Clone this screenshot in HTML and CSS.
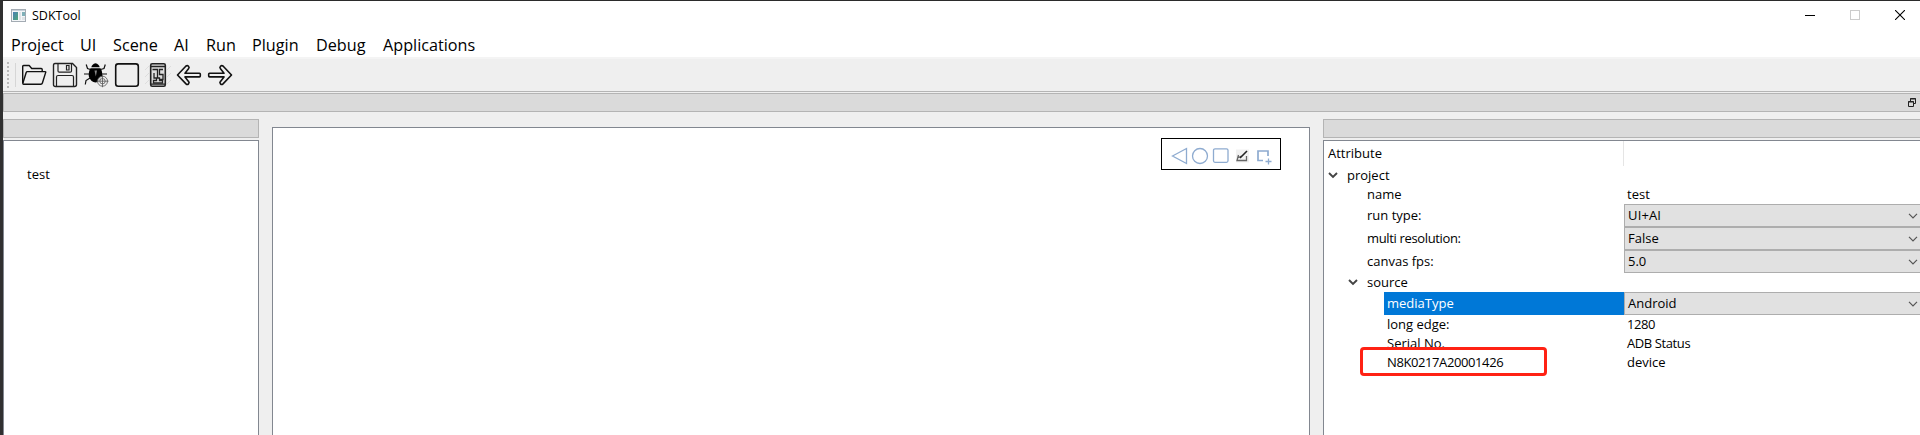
FILE: index.html
```html
<!DOCTYPE html>
<html lang="en">
<head>
<meta charset="utf-8">
<title>SDKTool</title>
<link rel="stylesheet" href="styles.css">
</head>
<body>
<div class="window">
  <header class="titlebar">
    <svg class="app-icon" width="15" height="13" viewBox="0 0 15 13">
      <defs><linearGradient id="pane" x1="0" y1="0" x2="1" y2="1"><stop offset="0" stop-color="#4a7fb5"/><stop offset="1" stop-color="#4fa878"/></linearGradient></defs>
      <rect x=".5" y=".5" width="14" height="12" fill="#f4f6f8" stroke="#a3abb3"/>
      <path d="M1 1.5h13" stroke="#c7d0d9"/>
      <rect x="2" y="3" width="5" height="8" fill="url(#pane)"/>
      <rect x="8" y="3" width="2" height="8" fill="#dfe3e6"/>
      <rect x="11" y="3" width="3" height="4" fill="#7fb0b8"/><rect x="11" y="8" width="3" height="3" fill="#dfe3e6"/>
    </svg>
    <span class="app-name">SDKTool</span>
    <div class="controls">
      <svg width="10" height="10" viewBox="0 0 10 10"><path d="M0 5.5h10" stroke="#000"/></svg>
      <svg width="10" height="10" viewBox="0 0 10 10"><rect x=".5" y=".5" width="9" height="9" fill="none" stroke="#ccc"/></svg>
      <svg width="10" height="10" viewBox="0 0 10 10"><path d="M0 0l10 10M10 0L0 10" stroke="#000" stroke-width="1.1"/></svg>
    </div>
  </header>
  <nav class="menubar">
    <span class="m-project">Project</span><span class="m-ui">UI</span><span class="m-scene">Scene</span><span class="m-ai">AI</span><span class="m-run">Run</span><span class="m-plugin">Plugin</span><span class="m-debug">Debug</span><span class="m-apps">Applications</span>
  </nav>
  <div class="toolbar">
    <svg class="grip" width="10" height="26" viewBox="0 0 10 26"><path d="M1 0v26" stroke="#b8b8b8" stroke-width="2" stroke-dasharray="2 2"/><path d="M8.500 1v24" stroke="#d6d6d6"/></svg>
    <svg width="26" height="26" viewBox="0 0 26 26" fill="none" stroke="#111" stroke-width="1.4" stroke-linejoin="round"><path d="M1.700 21V4.600Q1.700 3.500 2.700 3.500h5.500l2.500 3h9.500q1 0 1 1v2"/><path d="M6.300 9.600H24.200q.8 0 .5.800L21.400 21q-.4 1.200-1.500 1.200H2.700q-1.200 0-.8-1.200L5.200 10.500q.3-.9 1.100-.9z"/></svg>
    <svg width="26" height="26" viewBox="0 0 26 26" fill="none" stroke="#222" stroke-width="1.4"><path d="M3 1.500h17.500l4 4V22.500q0 2-2 2H3.500q-2 0-2-2V3.500q0-2 1.500-2z"/><path d="M6 2v7q0 1.200 1.200 1.200h11q1.300 0 1.300-1.200V2M14.500 3.500h2.500v4.500h-2.500zM4.500 24V15q0-1.500 1.500-1.500h14q1.500 0 1.500 1.500v9" stroke-width="1.200"/></svg>
    <svg width="26" height="26" viewBox="0 0 26 26"><g fill="none" stroke="#111" stroke-width="1.200"><path d="M7.500 7.500L4.500 6.500 3.200 2.500M17.500 7.500l3.500-1 1.300-4M6 12H1M19 12h5M7 16l-4 2.500-.7 4"/></g><path d="M8.300 5.300Q9 2 12.500 1.200 16 2 16.700 5.300z"/><path d="M7.500 6.200h10Q20 10 19 15q-2 5-6.500 5.500Q8 20 6 15 5 10 7.500 6.200z"/><path d="M11.500 8.500h2.500l-1.200 6z" fill="#888"/><circle cx="19.500" cy="19.200" r="5" fill="#eee" fill-opacity=".85"/><g fill="none" stroke="#555" stroke-width=".8"><circle cx="19.500" cy="19.200" r="5"/><circle cx="19.500" cy="19.200" r="2.700"/><path d="M13.500 19.200h12M19.500 13.200v12"/></g></svg>
    <svg width="26" height="26" viewBox="0 0 26 26"><rect x="1.700" y="1.900" width="22.600" height="22.400" rx="2.500" fill="none" stroke="#111" stroke-width="1.600"/></svg>
    <svg width="26" height="26" viewBox="0 0 26 26" fill="none" stroke="#222"><path d="M0 8l4-4M0 15l4-4M0 22l4-4M22 8l4-4M22 15l4-4M22 22l4-4" stroke="#ddd"/><rect x="5.700" y="1.700" width="14.600" height="22.600" rx="1.500" fill="#ddd" stroke-width="1.600"/><path d="M6 4.500h14M6 22.200h14" stroke-width="1.300"/><path d="M7.500 7.500h5v8.500H9v-5M18 7.500h-3.500v5H18v5h-3.500M8.500 21v-2.500h3V16h3v2.500h3V21z" stroke-width="1.300"/></svg>
    <svg width="26" height="26" viewBox="0 0 26 26" fill="none" stroke="#111" stroke-width="1.600" stroke-linejoin="round"><path d="M1.500 13L10 4q1.300-1 2.500.2t0 2.600L9 11.300H23.500q.8 0 .8.800v2q0 .8-.8.800H9L12.500 19.400q1.200 1.300 0 2.500t-2.500 0z"/></svg>
    <svg width="26" height="26" viewBox="0 0 26 26" fill="none" stroke="#111" stroke-width="1.600" stroke-linejoin="round"><path d="M24.500 13L16 4q-1.300-1-2.500.2t0 2.600L17 11.300H2.500q-.8 0-.8.800v2q0 .8.800.8H17L13.500 19.400q-1.200 1.300 0 2.500t2.500 0z"/></svg>
  </div>
  <div class="dock-strip">
    <svg width="8" height="9" viewBox="0 0 8 9" fill="none" stroke="#222"><path d="M2.500 3V.5h5v5H6M2 1h6"/><path d="M.5 3.500h5v5h-5zM0 4h6"/></svg>
  </div>
  <main class="workspace">
    <section class="left-dock">
      <div class="dock-title"></div>
      <div class="project-tree"><span class="project-name">test</span></div>
    </section>
    <section class="canvas">
      <div class="shape-tools">
        <svg width="104" height="24" viewBox="0 0 104 24" fill="none" stroke="#8eabd0" stroke-width="1.300">
          <path d="M1.500 12L15.500 4.500v15z"/><circle cx="29" cy="12" r="7.500"/><rect x="42.500" y="4.800" width="14.500" height="13.500" rx="1.500"/>
          <rect x="65" y="5.500" width="13" height="13" fill="#f1f1f1" stroke="none"/><path d="M67.500 11l-1.500 5.500h9.500V12M67.500 13.500l3-1.500" stroke="#666"/><path d="M69 14L76 7" stroke="#222" stroke-width="1.600"/>
          <path d="M97 12V7H87v9.500h5" stroke-width="1.700"/><path d="M97.500 14.500v6M94.500 17.500h6" stroke-width="1.300"/>
        </svg>
      </div>
    </section>
    <section class="right-dock">
      <div class="dock-title"></div>
      <div class="properties">
        <div class="row head"><span class="key">Attribute</span><span class="val"></span></div>
        <div class="row group"><svg class="chev" width="10" height="7" viewBox="0 0 10 7"><path d="M1 1l4 4 4-4" fill="none" stroke="#444" stroke-width="1.900"/></svg><span class="key">project</span></div>
        <div class="row"><span class="key l1">name</span><span class="val">test</span></div>
        <div class="row tall"><span class="key l1">run type:</span><div class="combo"><span class="wide">UI+AI</span><svg width="10" height="6" viewBox="0 0 10 6"><path d="M1 .8l4 4 4-4" fill="none" stroke="#555" stroke-width="1.200"/></svg></div></div>
        <div class="row tall"><span class="key l1 resolution">multi resolution:</span><div class="combo"><span>False</span><svg width="10" height="6" viewBox="0 0 10 6"><path d="M1 .8l4 4 4-4" fill="none" stroke="#555" stroke-width="1.200"/></svg></div></div>
        <div class="row tall"><span class="key l1">canvas fps:</span><div class="combo"><span>5.0</span><svg width="10" height="6" viewBox="0 0 10 6"><path d="M1 .8l4 4 4-4" fill="none" stroke="#555" stroke-width="1.200"/></svg></div></div>
        <div class="row group nested"><svg class="chev" width="10" height="7" viewBox="0 0 10 7"><path d="M1 1l4 4 4-4" fill="none" stroke="#444" stroke-width="1.900"/></svg><span class="key">source</span></div>
        <div class="row tall selected"><span class="key l2">mediaType</span><div class="combo"><span>Android</span><svg width="10" height="6" viewBox="0 0 10 6"><path d="M1 .8l4 4 4-4" fill="none" stroke="#555" stroke-width="1.200"/></svg></div></div>
        <div class="row"><span class="key l2">long edge:</span><span class="val number">1280</span></div>
        <div class="row"><span class="key l2">Serial No.</span><span class="val status">ADB Status</span></div>
        <div class="row marked"><span class="key l2 serial">N8K0217A20001426</span><span class="val">device</span><i class="marker"></i></div>
      </div>
    </section>
  </main>
</div>
</body>
</html>
```
FILE: styles.css
```css
* { box-sizing: border-box; }
body { margin: 0; font: 13px/19px "Open Sans", "Noto Sans", sans-serif; color: #000; background: #efefef; overflow: hidden; }
svg { display: block; flex: none; }
.window { width: 1920px; height: 435px; border-top: 1px solid #2b2b2b; border-left: 3px solid #303030; display: flex; flex-direction: column; }
.titlebar { height: 28px; flex: none; background: #fff; display: flex; align-items: center; padding: 0 15px 0 8px; }
.app-name { margin-left: 6px; font-size: 12.5px; padding-top: 1px; }
.controls { margin-left: auto; display: flex; gap: 35px; }
.menubar { height: 30px; flex: none; background: #fff; border-bottom: 2px solid #f4f4f4; display: flex; padding-left: 8px; font-size: 16.2px; line-height: 32px; white-space: nowrap; }
.menubar span { flex: none; }
.m-project { width: 69px; } .m-ui { width: 33px; } .m-scene { width: 61px; } .m-ai { width: 32px; }
.m-run { width: 46px; } .m-plugin { width: 64px; } .m-debug { width: 67px; }
.toolbar { height: 33px; flex: none; border-bottom: 1px solid #b4b4b4; display: flex; align-items: center; padding-left: 4px; gap: 5px; }
.grip { margin-right: -1px; }
.dock-strip { height: 19px; flex: none; margin-top: 1px; background: #dadada; border: 1px solid #b4b4b4; border-right: 0; display: flex; justify-content: flex-end; align-items: center; padding-right: 4px; }
.workspace { flex: 1; min-height: 0; display: flex; margin-top: 7px; }
.left-dock { width: 256px; display: flex; flex-direction: column; }
.dock-title { height: 19px; flex: none; background: #dadada; border: 1px solid #b4b4b4; }
.project-tree { flex: 1; margin-top: 2px; background: #fff; border: 1px solid #828790; border-bottom: 0; padding: 24px 0 0 23px; }
.canvas { width: 1038px; margin: 8px 13px 0 13px; background: #fff; border: 1px solid #828790; border-bottom: 0; display: flex; justify-content: flex-end; align-items: flex-start; padding: 10px 28px 0 0; }
.shape-tools { width: 120px; height: 32px; border: 1px solid #000; padding: 5px 0 0 9px; }
.right-dock { flex: 1; min-width: 0; display: flex; flex-direction: column; }
.right-dock .dock-title { border-right: 0; }
.properties { flex: 1; margin-top: 2px; background: #fff; border: 1px solid #828790; border-right: 0; border-bottom: 0; }
.row { height: 19px; display: grid; grid-template-columns: 300px 1fr; align-items: center; }
.head { height: 25px; }
.head .key { padding-left: 4px; }
.head .val { height: 25px; border-left: 1px solid #e5e5e5; margin-left: -1px; }
.group { height: 19px; display: flex; padding-left: 4px; }
.group .key { margin-left: 9px; }
.nested { padding-left: 24px; }
.tall { height: 23px; }
.l1 { padding-left: 43px; }
.l2 { padding-left: 63px; }
.val { padding-left: 3px; }
.combo { height: 23px; background: #e1e1e1; border: 1px solid #adadad; border-right: 0; display: flex; align-items: center; justify-content: space-between; padding: 0 2px 0 3px; }
.selected .key { height: 23px; line-height: 23px; margin-left: 60px; padding-left: 3px; background: #0078d7; color: #fff; }
.wide { letter-spacing: .15px; }
.resolution { letter-spacing: -.35px; }
.serial { letter-spacing: -.4px; }
.number { letter-spacing: -.4px; }
.status { letter-spacing: -.4px; }
.marked { position: relative; }
.marker { position: absolute; left: 36px; top: -6px; width: 187px; height: 29px; border: 3px solid #ff2214; border-radius: 4px; }
```
